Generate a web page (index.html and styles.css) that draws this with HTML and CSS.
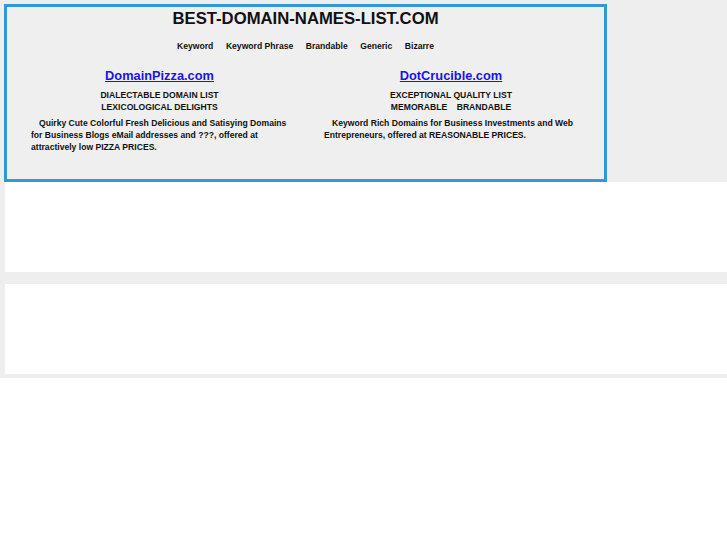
FILE: index.html
```html
<!DOCTYPE html>
<html lang="en">
<head>
<meta charset="utf-8">
<title>BEST-DOMAIN-NAMES-LIST.COM</title>
<link rel="stylesheet" href="styles.css">
</head>
<body>
<div class="page">
  <div class="masthead">
    <h1 class="site-title">BEST-DOMAIN-NAMES-LIST.COM</h1>
    <nav class="nav">
      <span>Keyword</span>
      <span>Keyword Phrase</span>
      <span>Brandable</span>
      <span>Generic</span>
      <span>Bizarre</span>
    </nav>
    <div class="columns">
      <div class="col">
        <a class="site-link" href="#">DomainPizza.com</a>
        <p class="tagline">DIALECTABLE DOMAIN LIST<br>LEXICOLOGICAL DELIGHTS</p>
        <p class="blurb">Quirky Cute Colorful Fresh Delicious and Satisying Domains for Business Blogs eMail addresses and ???, offered at attractively low PIZZA PRICES.</p>
      </div>
      <div class="col">
        <a class="site-link" href="#">DotCrucible.com</a>
        <p class="tagline">EXCEPTIONAL QUALITY LIST<br>MEMORABLE&nbsp;&nbsp;&nbsp; BRANDABLE</p>
        <p class="blurb">Keyword Rich Domains for Business Investments and Web Entrepreneurs, offered at REASONABLE PRICES.</p>
      </div>
    </div>
  </div>
  <div class="panel"></div>
  <div class="panel panel-spaced"></div>
</div>
</body>
</html>
```

FILE: styles.css
```css
html, body {
  margin: 0;
  padding: 0;
  background: #ffffff;
}

body {
  font-family: "Liberation Sans", Arial, Helvetica, sans-serif;
  color: #111111;
}

.page {
  background: #eeeeee;
  padding: 4px 0 4px 5px;
}

.masthead {
  width: 597px;
  margin-left: -1px;
  border: 3px solid #3399d6;
  background: #efefef;
  padding: 1px 0 26px;
}

.site-title {
  margin: 0;
  font-size: 16.7px;
  line-height: 21px;
  font-weight: bold;
  text-align: center;
  color: #111111;
}

/* small bold copy shared by the nav, taglines and blurbs */
.nav,
.tagline,
.blurb {
  font-size: 8.6px;
  line-height: 12px;
  font-weight: bold;
}

.nav {
  display: flex;
  justify-content: center;
  gap: 12.5px;
  margin-top: 11px;
}

.columns {
  display: grid;
  grid-template-columns: 257px 254px;
  column-gap: 36px;
  padding-left: 24px;
  margin-top: 16px;
}

.col {
  display: flex;
  flex-direction: column;
  align-items: center;
}

.site-link {
  font-size: 12.8px;
  line-height: 16px;
  font-weight: bold;
  color: #1616e8;
  text-decoration: underline;
}

.tagline {
  margin: 5px 0 0;
  text-align: center;
}

.blurb {
  align-self: stretch;
  margin: 4px 0 0;
  text-indent: 8px;
}

.panel {
  height: 90px;
  background: #ffffff;
}

.panel-spaced {
  margin-top: 12px;
}
```
